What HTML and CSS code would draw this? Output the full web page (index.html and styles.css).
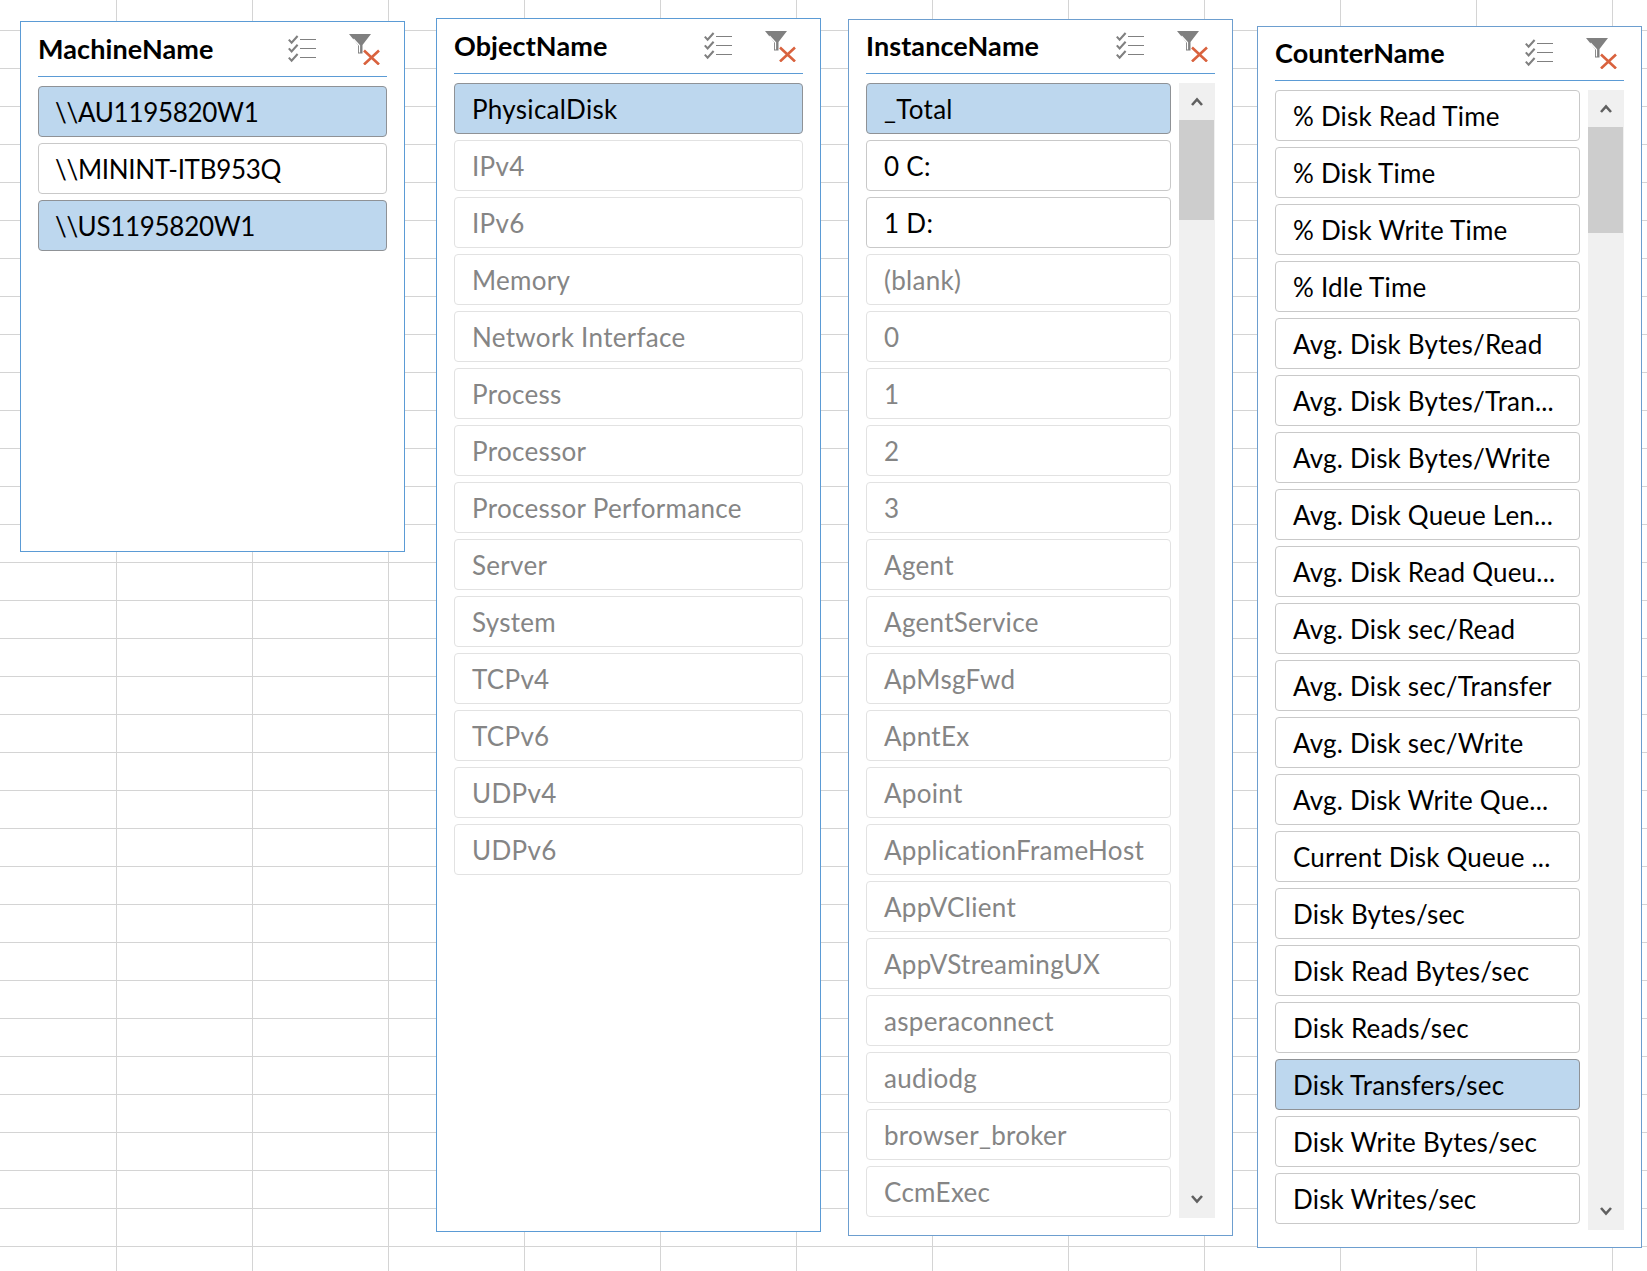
FILE: index.html
```html
<html>
  <head>
    <link rel="stylesheet" href="styles.css">
  </head>
  <body>
    <svg class="defs" width="0" height="0">
      <symbol id="multi" viewBox="0 0 28 28">
        <path d="M12 4.5H28M12 13.5H28M12 22.5H28" stroke="#808080" stroke-width="1.2" fill="none"/>
        <path d="M.8 4.6 3.6 7.6 9.6 1M.8 13.4 3.6 16.4 9.6 9.8M.8 22.6 3.6 25.6 9.6 19" stroke="#808080" stroke-width="2.1" fill="none"/>
      </symbol>
      <symbol id="clear" viewBox="0 0 32 32">
        <path d="M0 1H22L13.5 12V20.500H9V12Z" fill="#808080"/>
        <path d="M4.500 6 10.500 12.500V19.500" stroke="#fff" stroke-width="1.200" fill="none"/>
        <path d="M15 17.500 30 31.500M30 17.500 15 31.500" stroke="#d9623e" stroke-width="2.600" fill="none"/>
      </symbol>
      <symbol id="chev-up" viewBox="0 0 12 9">
        <path d="M1 8 6 2.500 11 8" stroke="#606060" stroke-width="2.600" fill="none"/>
      </symbol>
      <symbol id="chev-down" viewBox="0 0 12 9">
        <path d="M1 1 6 6.500 11 1" stroke="#606060" stroke-width="2.600" fill="none"/>
      </symbol>
    </svg>

    <section class="slicer machine">
      <header class="head">
        <div class="title">MachineName</div>
        <svg class="icon-multi"><use href="#multi"/></svg>
        <svg class="icon-clear"><use href="#clear"/></svg>
      </header>
      <div class="content">
        <div class="list">
          <div class="item on">\\AU1195820W1</div>
          <div class="item">\\MININT-ITB953Q</div>
          <div class="item on">\\US1195820W1</div>
        </div>
      </div>
    </section>

    <section class="slicer object">
      <header class="head">
        <div class="title">ObjectName</div>
        <svg class="icon-multi"><use href="#multi"/></svg>
        <svg class="icon-clear"><use href="#clear"/></svg>
      </header>
      <div class="content">
        <div class="list">
          <div class="item on">PhysicalDisk</div>
          <div class="item off">IPv4</div>
          <div class="item off">IPv6</div>
          <div class="item off">Memory</div>
          <div class="item off">Network Interface</div>
          <div class="item off">Process</div>
          <div class="item off">Processor</div>
          <div class="item off">Processor Performance</div>
          <div class="item off">Server</div>
          <div class="item off">System</div>
          <div class="item off">TCPv4</div>
          <div class="item off">TCPv6</div>
          <div class="item off">UDPv4</div>
          <div class="item off">UDPv6</div>
        </div>
      </div>
    </section>

    <section class="slicer instance">
      <header class="head">
        <div class="title">InstanceName</div>
        <svg class="icon-multi"><use href="#multi"/></svg>
        <svg class="icon-clear"><use href="#clear"/></svg>
      </header>
      <div class="content">
        <div class="list">
          <div class="item on">_Total</div>
          <div class="item">0 C:</div>
          <div class="item">1 D:</div>
          <div class="item off">(blank)</div>
          <div class="item off">0</div>
          <div class="item off">1</div>
          <div class="item off">2</div>
          <div class="item off">3</div>
          <div class="item off">Agent</div>
          <div class="item off">AgentService</div>
          <div class="item off">ApMsgFwd</div>
          <div class="item off">ApntEx</div>
          <div class="item off">Apoint</div>
          <div class="item off">ApplicationFrameHost</div>
          <div class="item off">AppVClient</div>
          <div class="item off">AppVStreamingUX</div>
          <div class="item off">asperaconnect</div>
          <div class="item off">audiodg</div>
          <div class="item off">browser_broker</div>
          <div class="item off">CcmExec</div>
        </div>
        <div class="scroll">
          <div class="arrow"><svg><use href="#chev-up"/></svg></div>
          <div class="thumb"></div>
          <div class="rest"></div>
          <div class="arrow"><svg><use href="#chev-down"/></svg></div>
        </div>
      </div>
    </section>

    <section class="slicer counter">
      <header class="head">
        <div class="title">CounterName</div>
        <svg class="icon-multi"><use href="#multi"/></svg>
        <svg class="icon-clear"><use href="#clear"/></svg>
      </header>
      <div class="content">
        <div class="list">
          <div class="item">% Disk Read Time</div>
          <div class="item">% Disk Time</div>
          <div class="item">% Disk Write Time</div>
          <div class="item">% Idle Time</div>
          <div class="item">Avg. Disk Bytes/Read</div>
          <div class="item">Avg. Disk Bytes/Tran...</div>
          <div class="item">Avg. Disk Bytes/Write</div>
          <div class="item">Avg. Disk Queue Len...</div>
          <div class="item">Avg. Disk Read Queu...</div>
          <div class="item">Avg. Disk sec/Read</div>
          <div class="item">Avg. Disk sec/Transfer</div>
          <div class="item">Avg. Disk sec/Write</div>
          <div class="item">Avg. Disk Write Que...</div>
          <div class="item">Current Disk Queue ...</div>
          <div class="item">Disk Bytes/sec</div>
          <div class="item">Disk Read Bytes/sec</div>
          <div class="item">Disk Reads/sec</div>
          <div class="item on">Disk Transfers/sec</div>
          <div class="item">Disk Write Bytes/sec</div>
          <div class="item">Disk Writes/sec</div>
        </div>
        <div class="scroll">
          <div class="arrow"><svg><use href="#chev-up"/></svg></div>
          <div class="thumb"></div>
          <div class="rest"></div>
          <div class="arrow"><svg><use href="#chev-down"/></svg></div>
        </div>
      </div>
    </section>
  </body>
</html>
```

FILE: styles.css
```css
html {
  height: 100%;
  background: white;
}
body {
  margin: 0;
  position: relative;
  width: 1647px;
  height: 1271px;
  overflow: hidden;
  font-family: Lato, "Open Sans", sans-serif;
  color: black;
  background-color: white;
  background-image:
    linear-gradient(to right, #d4d4d4 1px, transparent 1px),
    linear-gradient(to bottom, #d4d4d4 1px, transparent 1px);
  background-size: 136px 100%, 100% 38px;
  background-position: 116px 0, 0 30px;
}
.defs {
  position: absolute;
}

/* slicers sit on the sheet like floating windows */
.slicer {
  position: absolute;
  box-sizing: border-box;
  width: 385px;
  padding: 0 17px;
  background: white;
  border: 1px solid #5b9bd5;
}
.machine {
  left: 20px;
  top: 21px;
  height: 531px;
}
.object {
  left: 436px;
  top: 18px;
  height: 1214px;
}
.instance {
  left: 848px;
  top: 19px;
  height: 1217px;
  border-color: #6d9ecf;
}
.counter {
  left: 1257px;
  top: 26px;
  height: 1222px;
  border-color: #6d9ecf;
}

.head {
  box-sizing: border-box;
  display: flex;
  height: 55px;
  padding-right: 6px;
  border-bottom: 1px solid #5b9bd5;
}
.instance .head,
.counter .head {
  height: 54px;
}
.title {
  flex: 1;
  font-size: 27px;
  font-weight: 700;
  letter-spacing: .1px;
  line-height: 30px;
  padding-top: 12px;
}
.instance .title,
.counter .title {
  padding-top: 11px;
}
.icon-multi {
  width: 28px;
  height: 28px;
  margin-top: 13px;
  margin-right: 33px;
}
.icon-clear {
  width: 32px;
  height: 32px;
  margin-top: 11px;
}
.instance .icon-multi,
.counter .icon-multi {
  margin-top: 12px;
}
.instance .icon-clear,
.counter .icon-clear {
  margin-top: 10px;
}

.content {
  display: flex;
  gap: 8px;
  padding-top: 9px;
}
.list {
  flex: 1;
  display: flex;
  flex-direction: column;
  gap: 6px;
}
.item {
  box-sizing: border-box;
  height: 51px;
  padding: 0 17px;
  font-size: 26px;
  letter-spacing: .3px;
  line-height: 51px;
  white-space: nowrap;
  background: white;
  border: 1px solid #c9c9c9;
  border-radius: 4px;
}
.machine .item {
  padding-left: 16px;
  letter-spacing: -.3px;
}
.counter .item {
  letter-spacing: .2px;
}
.item.on {
  background: #bdd7ee;
  border-color: #8f9296;
}
.item.off {
  color: #858585;
  border-color: #e2e2e2;
}

.scroll {
  display: flex;
  flex-direction: column;
  width: 36px;
  height: 1135px;
  background: #f0f0f0;
}
.counter .scroll {
  height: 1140px;
}
.arrow {
  flex: none;
  display: flex;
  align-items: center;
  justify-content: center;
  height: 37px;
}
.arrow svg {
  width: 12px;
  height: 9px;
}
.thumb {
  flex: none;
  width: 35px;
  height: 100px;
  background: #cdcdcd;
}
.counter .thumb {
  height: 106px;
}
.rest {
  flex: 1;
}
```
